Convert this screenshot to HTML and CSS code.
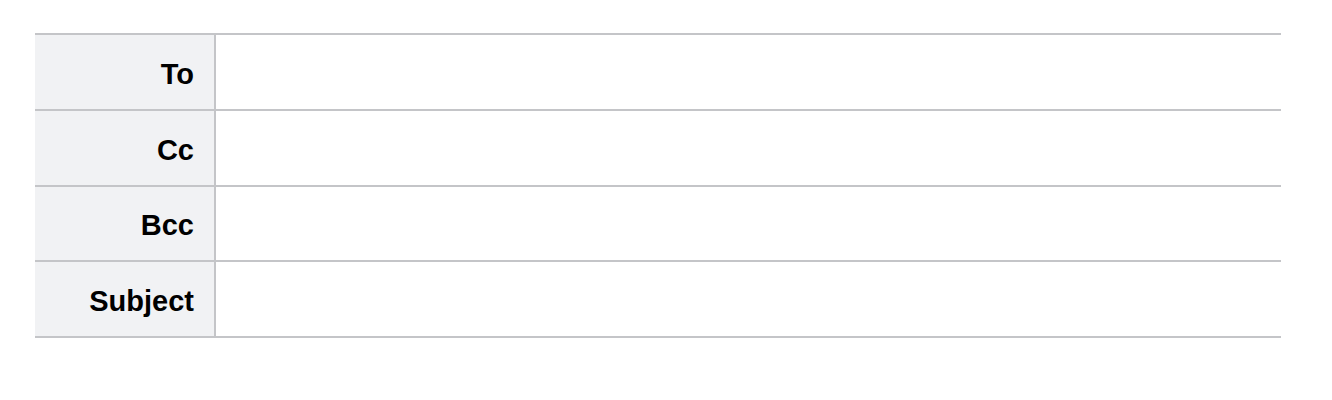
FILE: index.html
```html
<!DOCTYPE html>
<html>
<head>
<meta charset="utf-8">
<link rel="stylesheet" href="styles.css">
</head>
<body>
<div class="page">
  <div class="form">
    <div class="row"><div class="label">To</div><div class="field"></div></div>
    <div class="row"><div class="label">Cc</div><div class="field"></div></div>
    <div class="row"><div class="label">Bcc</div><div class="field"></div></div>
    <div class="row"><div class="label">Subject</div><div class="field"></div></div>
  </div>
</div>
</body>
</html>
```
FILE: styles.css
```css
html, body {
  margin: 0;
  padding: 0;
  background: #ffffff;
}
.page {
  padding: 33px 51px 0 35px;
}
.form {
  border-top: 2px solid #c4c5c8;
  font-family: "Liberation Sans", Arial, sans-serif;
}
.row {
  display: grid;
  grid-template-columns: 181px 1fr;
  height: 73.75px;
  border-bottom: 2px solid #c4c5c8;
}
.label {
  background: #f1f2f4;
  border-right: 2px solid #c4c5c8;
  display: flex;
  align-items: center;
  justify-content: flex-end;
  padding: 5px 20px 0 0;
  font-weight: bold;
  font-size: 29px;
  color: #000;
}
.field {
  background: #fff;
}
```
